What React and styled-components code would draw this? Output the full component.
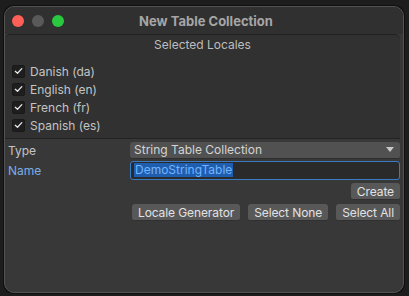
import React from "react";
import styled, { createGlobalStyle } from "styled-components";

const GlobalStyle = createGlobalStyle`
  html, body {
    margin: 0;
    padding: 0;
    background: #1d1d1d;
    font-family: Inter, "Noto Sans", sans-serif;
    font-size: 12px;
  }
  * {
    box-sizing: border-box;
  }
`;

const Page = styled.div`
  width: 409px;
  height: 296px;
  padding: 6px 5px 3px 4px;
`;

const Window = styled.div`
  height: 287px;
  display: flex;
  flex-direction: column;
  background: #383838;
  border: 1px solid #535353;
  border-radius: 10px;
  box-shadow: 0 0 0 1px #0f0f0f;
  overflow: hidden;
`;

const TitleBar = styled.div`
  height: 27px;
  display: grid;
  grid-template-columns: 1fr auto 1fr;
  align-items: center;
  padding-left: 7px;
  background: #303030;
`;

const Lights = styled.div`
  display: flex;
  gap: 8px;
`;

const Light = styled.span`
  width: 12px;
  height: 12px;
  border-radius: 50%;
  background: ${(p) => p.$color};
`;

const Title = styled.div`
  font-size: 13px;
  font-weight: 700;
  color: #a6a6a6;
  padding-right: 3px;
`;

const LocaleBox = styled.div`
  margin-right: 3px;
  background: #313131;
  border-top: 1px solid #222;
  border-bottom: 1px solid #222;
  border-radius: 5px 5px 0 0;
  padding: 0 0 4px 7px;
`;

const BoxHeader = styled.div`
  height: 20px;
  line-height: 20px;
  text-align: center;
  color: #bdbdbd;
  margin-bottom: 7px;
  padding-right: 7px;
`;

const CheckRow = styled.div`
  height: 18px;
  display: flex;
  align-items: center;
  gap: 5px;
  color: #c4c4c4;
`;

const CheckBox = styled.span`
  width: 13px;
  height: 13px;
  border-radius: 2px;
  background: #1e1e1e;
  border: 1px solid #191919;
  display: flex;
  align-items: center;
  justify-content: center;
`;

const Body = styled.div`
  padding: 2px 3px 0 3px;
  display: flex;
  flex-direction: column;
`;

const FieldRow = styled.div`
  display: grid;
  grid-template-columns: 122px 1fr;
  align-items: center;
  height: ${(p) => p.$h}px;
  margin-bottom: 1px;
`;

const Label = styled.div`
  color: ${(p) => (p.$active ? "#78aee8" : "#c4c4c4")};
`;

const Dropdown = styled.div`
  height: 17px;
  background: #515151;
  border-radius: 3px;
  border-bottom: 1px solid #2e2e2e;
  display: flex;
  align-items: center;
  justify-content: space-between;
  padding: 0 6px 0 4px;
  color: #d4d4d4;
`;

const TextField = styled.div`
  height: 19px;
  background: #2a2a2a;
  border: 1px solid #3a7bc2;
  border-radius: 3px;
  display: flex;
  align-items: center;
  padding-left: 3px;
`;

const Selection = styled.span`
  background: #1f5eae;
  color: #72b4ff;
  line-height: 14px;
  padding: 0 1px;
`;

const ButtonRow = styled.div`
  display: flex;
  justify-content: flex-end;
  gap: 8px;
  margin-top: ${(p) => p.$mt}px;
`;

const Button = styled.div`
  height: 17px;
  padding: 0 6px;
  background: #585858;
  border-radius: 3px;
  border-bottom: 1px solid #303030;
  color: #e2e2e2;
  display: flex;
  align-items: center;
  letter-spacing: -0.1px;
`;

const Check = () => (
  <svg width="9" height="8" viewBox="0 0 9 8">
    <path d="M1.3 4.3 L3.5 6.2 L7.8 1.6" stroke="#e6e6e6" strokeWidth="1.3" fill="none" strokeLinecap="round" strokeLinejoin="round" />
  </svg>
);

const locales = ["Danish (da)", "English (en)", "French (fr)", "Spanish (es)"];

const App = () => {
  return (
    <Page>
      <GlobalStyle />
      <Window>
        <TitleBar>
          <Lights>
            <Light $color="#fe5f57" />
            <Light $color="#595959" />
            <Light $color="#2ac840" />
          </Lights>
          <Title>New Table Collection</Title>
          <div />
        </TitleBar>
        <LocaleBox>
          <BoxHeader>Selected Locales</BoxHeader>
          {locales.map((l) => (
            <CheckRow key={l}>
              <CheckBox>
                <Check />
              </CheckBox>
              {l}
            </CheckRow>
          ))}
        </LocaleBox>
        <Body>
          <FieldRow $h={18}>
            <Label>Type</Label>
            <Dropdown>
              String Table Collection
              <svg width="8" height="5" viewBox="0 0 8 5">
                <path d="M0 0 H8 L4 5 Z" fill="#c8c8c8" />
              </svg>
            </Dropdown>
          </FieldRow>
          <FieldRow $h={20}>
            <Label $active>Name</Label>
            <TextField>
              <Selection>DemoStringTable</Selection>
            </TextField>
          </FieldRow>
          <ButtonRow $mt={2}>
            <Button>Create</Button>
          </ButtonRow>
          <ButtonRow $mt={4}>
            <Button>Locale Generator</Button>
            <Button>Select None</Button>
            <Button>Select All</Button>
          </ButtonRow>
        </Body>
      </Window>
    </Page>
  );
};

export default App;
